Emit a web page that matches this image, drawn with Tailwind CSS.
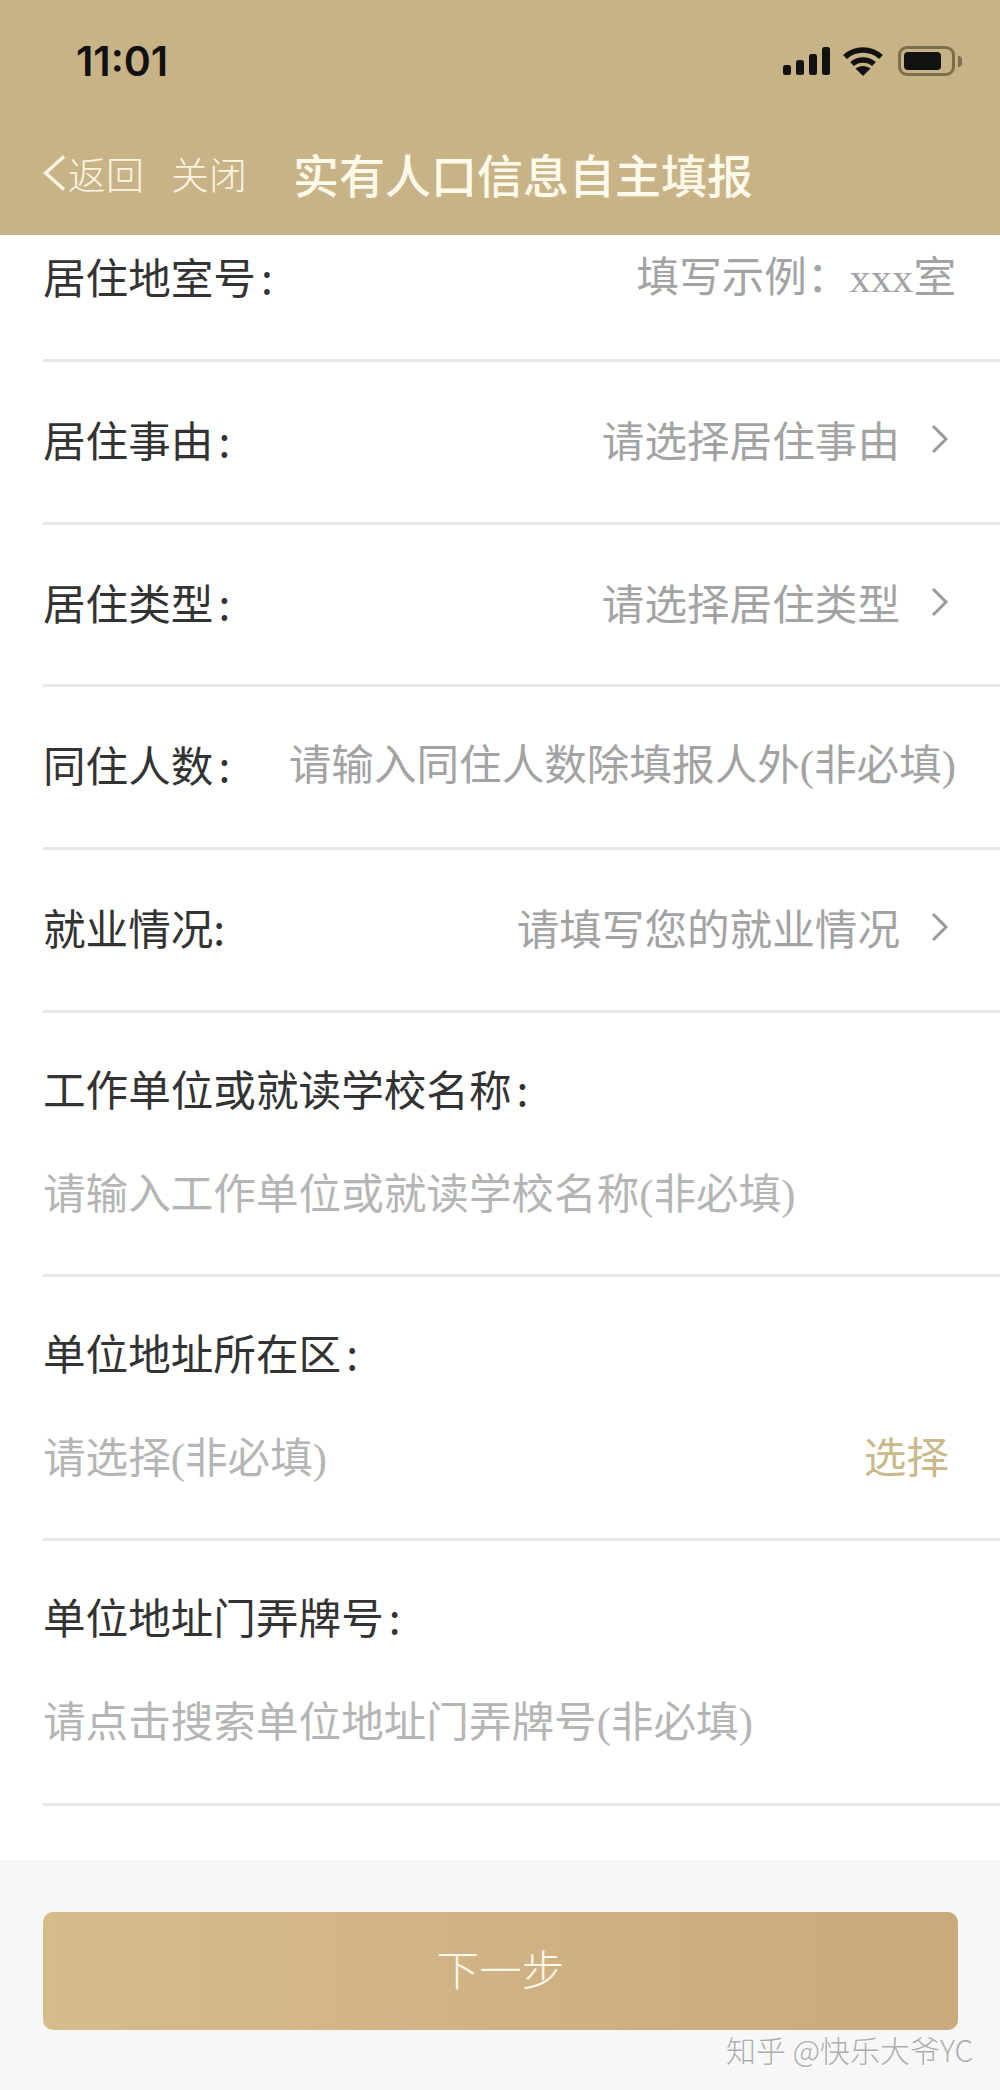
<!DOCTYPE html>
<html lang="zh-CN">
  <head>
    <meta charset="UTF-8" />
    <meta name="viewport" content="width=device-width, initial-scale=1.0" />
    <title>实有人口信息自主填报</title>
    <script src="https://cdn.jsdelivr.net/npm/@tailwindcss/browser@4"></script>
  </head>
  <body class="relative w-[1000px] h-[2090px] overflow-hidden bg-white font-['Noto_Sans_CJK_SC',sans-serif] text-[42.6px] leading-[50px] text-[#333]">
    <!-- Header -->
    <header class="h-[235px] bg-[#c8b387] flex flex-col">
      <div class="h-[143px] pl-[76px] pr-[38px] pt-[37px] flex items-start justify-between">
        <span class="font-['Inter',sans-serif] font-semibold text-[41px] leading-[48px] text-[#111]">11:01</span>
        <div class="flex items-center gap-[13px] mt-[9px]">
          <svg width="47" height="28" viewBox="0 0 47 28" fill="#111">
            <rect x="0" y="18" width="8" height="10" rx="2.5" />
            <rect x="13" y="13" width="8" height="15" rx="2.5" />
            <rect x="26" y="7" width="8" height="21" rx="2.5" />
            <rect x="39" y="0" width="8" height="28" rx="2.5" />
          </svg>
          <svg width="40" height="29" viewBox="0 0 40 29" fill="none" stroke="#111" stroke-width="5.500">
            <path d="M2 10 C12 0.5 28 0.5 38 10" />
            <path d="M9 17 C15 11.5 25 11.5 31 17" />
            <path d="M12.500 21.500 L20 29 L27.500 21.500 C23 18 17 18 12.500 21.500 Z" fill="#111" stroke="none" />
          </svg>
          <div class="flex items-center ml-[2px]">
            <div class="w-[57px] h-[30px] rounded-[9px] border-[3px] border-[#7d6f4e] p-[3px]">
              <div class="w-[37px] h-full rounded-[4px] bg-[#111]"></div>
            </div>
            <div class="w-[4px] h-[11px] ml-[3px] rounded-r-full bg-[#7d6f4e]"></div>
          </div>
        </div>
      </div>
      <div class="h-[60px] pl-[43px] flex items-center text-[#fbf4e2]">
        <svg width="23" height="36" viewBox="0 0 23 36" fill="none" stroke="currentColor" stroke-width="3.500">
          <path d="M21 1.500 L2.500 18 L21 34.500" />
        </svg>
        <span class="ml-[2px] text-[38px] font-light">返回</span>
        <span class="ml-[27px] text-[38px] font-light">关闭</span>
        <span class="ml-[46px] text-[46px] font-medium text-[#fff9ea]">实有人口信息自主填报</span>
      </div>
    </header>

    <!-- Form rows -->
    <main class="ml-[43px]">
      <div class="h-[127px] pr-[44px] pb-[42px] flex items-center justify-between border-b-[3px] border-[#e8e8e8]">
        <span>居住地室号<span class="ml-[5px]">:</span></span>
        <span class="text-[#a3a3a3]">填写示例：<span class="font-['Liberation_Serif',serif]">xxx</span>室</span>
      </div>

      <div class="h-[163px] pr-[51px] pb-[6px] flex items-center justify-between border-b-[3px] border-[#e8e8e8]">
        <span>居住事由<span class="ml-[5px]">:</span></span>
        <div class="flex items-center gap-[31px] text-[#a3a3a3]">
          <span>请选择居住事由</span>
          <svg width="18" height="30" viewBox="0 0 18 30" fill="none" stroke="#999" stroke-width="3"><path d="M2 2 L15 15 L2 28" /></svg>
        </div>
      </div>

      <div class="h-[162px] pr-[51px] pb-[6px] flex items-center justify-between border-b-[3px] border-[#e8e8e8]">
        <span>居住类型<span class="ml-[5px]">:</span></span>
        <div class="flex items-center gap-[31px] text-[#a3a3a3]">
          <span>请选择居住类型</span>
          <svg width="18" height="30" viewBox="0 0 18 30" fill="none" stroke="#999" stroke-width="3"><path d="M2 2 L15 15 L2 28" /></svg>
        </div>
      </div>

      <div class="h-[163px] pr-[44px] pb-[6px] flex items-center justify-between border-b-[3px] border-[#e8e8e8]">
        <span>同住人数<span class="ml-[5px]">:</span></span>
        <span class="text-[#a3a3a3]">请输入同住人数除填报人外<span class="font-['Liberation_Serif',serif]">(</span>非必填<span class="font-['Liberation_Serif',serif]">)</span></span>
      </div>

      <div class="h-[163px] pr-[51px] pb-[6px] flex items-center justify-between border-b-[3px] border-[#e8e8e8]">
        <span>就业情况:</span>
        <div class="flex items-center gap-[31px] text-[#a3a3a3]">
          <span>请填写您的就业情况</span>
          <svg width="18" height="30" viewBox="0 0 18 30" fill="none" stroke="#999" stroke-width="3"><path d="M2 2 L15 15 L2 28" /></svg>
        </div>
      </div>

      <div class="h-[264px] pt-[50px] flex flex-col gap-[53px] border-b-[3px] border-[#e8e8e8]">
        <span>工作单位或就读学校名称<span class="ml-[5px]">:</span></span>
        <span class="text-[#b5b5b5]">请输入工作单位或就读学校名称<span class="font-['Liberation_Serif',serif]">(</span>非必填<span class="font-['Liberation_Serif',serif]">)</span></span>
      </div>

      <div class="h-[264px] pt-[50px] pr-[51px] flex flex-col gap-[53px] border-b-[3px] border-[#e8e8e8]">
        <span>单位地址所在区<span class="ml-[5px]">:</span></span>
        <div class="flex justify-between">
          <span class="text-[#b5b5b5]">请选择<span class="font-['Liberation_Serif',serif]">(</span>非必填<span class="font-['Liberation_Serif',serif]">)</span></span>
          <span class="text-[#c9b98b]">选择</span>
        </div>
      </div>

      <div class="h-[265px] pt-[50px] flex flex-col gap-[53px] border-b-[3px] border-[#e8e8e8]">
        <span>单位地址门弄牌号<span class="ml-[5px]">:</span></span>
        <span class="text-[#b5b5b5]">请点击搜索单位地址门弄牌号<span class="font-['Liberation_Serif',serif]">(</span>非必填<span class="font-['Liberation_Serif',serif]">)</span></span>
      </div>
    </main>

    <!-- Footer -->
    <footer class="mt-[54px] h-[231px] bg-[#f7f7f7] pt-[52px] px-[43px]">
      <button class="w-[915px] h-[118px] pb-[7px] rounded-[10px] bg-gradient-to-r from-[#d7bc8b] to-[#c8aa7d] text-[#fff8ea] font-light">下一步</button>
    </footer>

    <!-- Watermark -->
    <div class="absolute left-[726px] top-[2032px] text-[30px] leading-[34px] whitespace-nowrap font-light text-[#adadad] [text-shadow:1px_1px_0_#fff]">知乎 @快乐大爷YC</div>
  </body>
</html>
